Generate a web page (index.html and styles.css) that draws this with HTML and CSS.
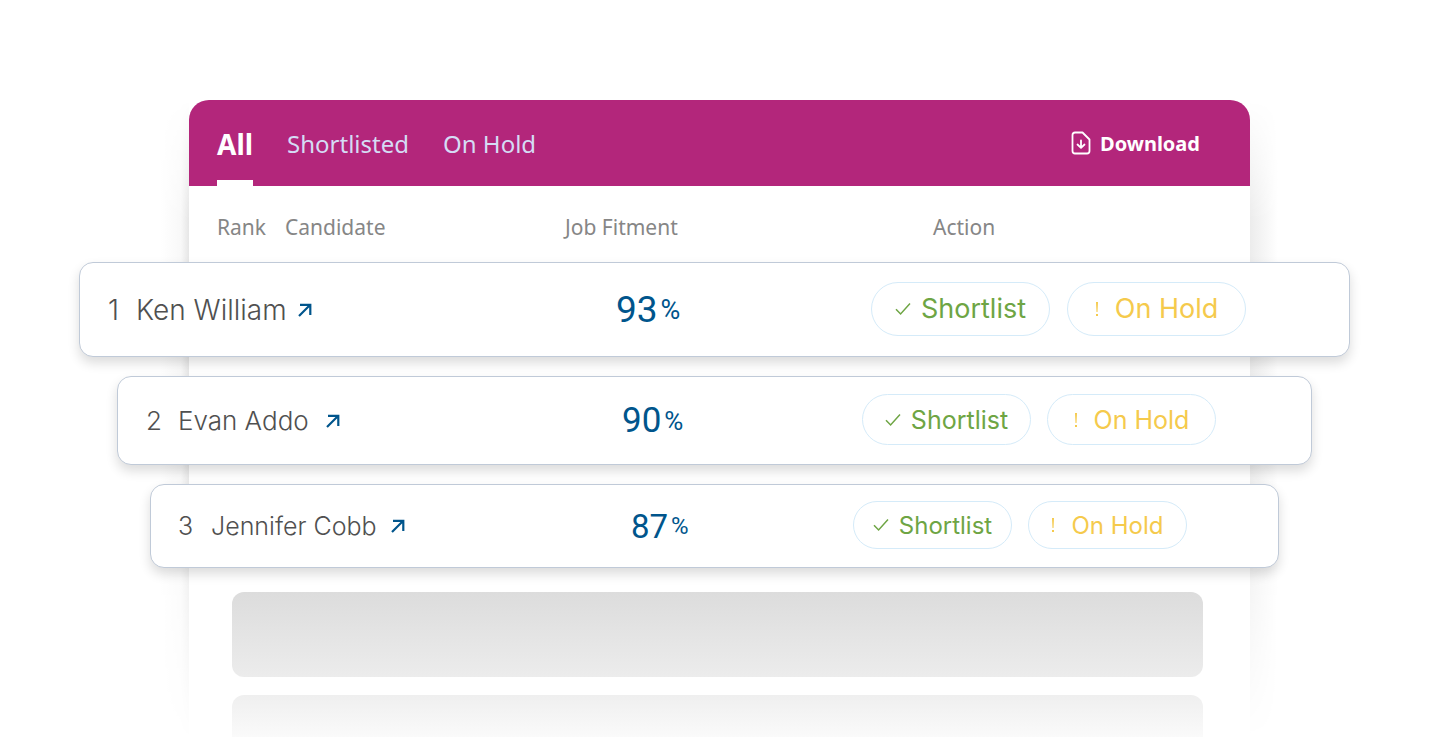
FILE: index.html
```html
<!DOCTYPE html>
<html lang="en">
    <head>
        <meta charset="utf-8">
        <title>Candidates</title>
        <link rel="stylesheet" href="styles.css">
    </head>
    <body>
        <svg class="sprite" aria-hidden="true">
            <symbol id="arrow" viewBox="0 0 14 14">
                <path d="M1 13L12.5 1.5M2 1.8H12.3V12" fill="none" stroke="currentColor" stroke-width="2.2"/>
            </symbol>
            <symbol id="check" viewBox="0 0 16 14">
                <path d="M1 7.2L5.6 12L15 1.6" fill="none" stroke="currentColor" stroke-width="1.5"/>
            </symbol>
            <symbol id="bang" viewBox="0 0 4 16">
                <path d="M1 1H3L2.5 11H1.5Z M1 13H3V15H1Z" fill="currentColor"/>
            </symbol>
        </svg>
        <div class="page">
            <div class="panel">
                <div class="header">
                    <nav class="tabs">
                        <a class="tab active" href="#all">All</a>
                        <a class="tab" href="#shortlisted">Shortlisted</a>
                        <a class="tab" href="#hold">On Hold</a>
                    </nav>
                    <button class="download" type="button">
                        <svg width="20" height="24" viewBox="0 0 20 24" fill="none" stroke="currentColor" stroke-width="1.8" stroke-linejoin="round" stroke-linecap="round">
                            <path d="M4 1.5H11.500L18.500 8.500V20Q18.500 22.500 16 22.500H4Q1.500 22.500 1.500 20V4Q1.500 1.500 4 1.500Z"/>
                            <path d="M10 9.500V16.500M6.500 13.500L10 16.800L13.500 13.500"/>
                        </svg>
                        Download
                    </button>
                </div>
                <table class="candidates">
                    <thead>
                        <tr class="titles">
                            <th>Rank</th>
                            <th>Candidate</th>
                            <th>Job Fitment</th>
                            <th>Action</th>
                        </tr>
                    </thead>
                    <tbody>
                        <tr class="row first">
                            <td>1</td>
                            <td><a class="name" href="#ken">Ken William <svg><use href="#arrow"/></svg></a></td>
                            <td class="score">93<span>%</span></td>
                            <td class="actions">
                                <button class="pill shortlist" type="button"><svg><use href="#check"/></svg>Shortlist</button>
                                <button class="pill hold" type="button"><svg><use href="#bang"/></svg>On Hold</button>
                            </td>
                        </tr>
                        <tr class="row second">
                            <td>2</td>
                            <td><a class="name" href="#evan">Evan Addo <svg><use href="#arrow"/></svg></a></td>
                            <td class="score">90<span>%</span></td>
                            <td class="actions">
                                <button class="pill shortlist" type="button"><svg><use href="#check"/></svg>Shortlist</button>
                                <button class="pill hold" type="button"><svg><use href="#bang"/></svg>On Hold</button>
                            </td>
                        </tr>
                        <tr class="row third">
                            <td>3</td>
                            <td><a class="name" href="#jennifer">Jennifer Cobb <svg><use href="#arrow"/></svg></a></td>
                            <td class="score">87<span>%</span></td>
                            <td class="actions">
                                <button class="pill shortlist" type="button"><svg><use href="#check"/></svg>Shortlist</button>
                                <button class="pill hold" type="button"><svg><use href="#bang"/></svg>On Hold</button>
                            </td>
                        </tr>
                    </tbody>
                </table>
                <div class="placeholder"></div>
                <div class="placeholder faded"></div>
            </div>
        </div>
    </body>
</html>
```
FILE: styles.css
```css
* {
    box-sizing: border-box;
}
body {
    margin: 0;
    background: white;
    font-family: "Noto Sans", sans-serif;
}
.sprite {
    display: none;
}
.page {
    height: 100vh;
    padding: 100px 180px 0 189px;
    overflow: hidden;
}
.panel {
    position: relative;
    z-index: 0;
}
/* side shadow, fades away towards the bottom */
.panel::before,
.panel::after {
    content: "";
    position: absolute;
    z-index: -1;
    top: 0;
    bottom: 0;
    width: 28px;
    -webkit-mask-image: linear-gradient(transparent, black 120px, black 350px, transparent 640px);
    mask-image: linear-gradient(transparent, black 120px, black 350px, transparent 640px);
}
.panel::before {
    right: 100%;
    background: linear-gradient(to left, #e6e6e6, #f8f8f8 8px, white);
}
.panel::after {
    left: 100%;
    background: linear-gradient(to right, #ececec, white);
}
.header {
    display: flex;
    justify-content: space-between;
    height: 86px;
    padding: 0 50px 0 28px;
    border-radius: 20px 20px 0 0;
    background: #b3267b;
}
.tabs {
    display: flex;
    gap: 34px;
}
.tab {
    color: #d5dcf5;
    font-size: 24px;
    line-height: 88px;
    text-decoration: none;
}
.tab.active {
    height: 86px;
    border-bottom: 6px solid white;
    color: white;
    font-size: 28px;
    font-weight: bold;
}
.download {
    display: flex;
    align-items: center;
    gap: 9px;
    padding: 0;
    border: 0;
    background: none;
    color: white;
    font: bold 20px "Noto Sans", sans-serif;
}
.candidates,
.candidates thead,
.candidates tbody {
    display: block;
}
.candidates tr {
    display: grid;
    align-items: center;
}
.candidates th,
.candidates td {
    padding: 0;
}
.titles {
    grid-template-columns: 68px 1fr 368px 289px;
    height: 76px;
    padding: 6px 28px 0;
    color: #868686;
    font-size: 21px;
    text-align: left;
}
.titles th {
    font-weight: normal;
}
.row {
    border: 1px solid #c0cad8;
    border-radius: 14px;
    background: white;
    box-shadow: 0 6px 12px rgba(0, 0, 0, 0.14);
    color: #505050;
    font-family: Inter, sans-serif;
    font-weight: 300;
}
.first {
    grid-template-columns: 28px 1fr 255px auto;
    height: 95px;
    margin: 0 -100px 19px -110px;
    padding: 0 103px 0 28px;
    font-size: 28px;
}
.second {
    grid-template-columns: 32px 1fr 240px auto;
    height: 89px;
    margin: 0 -62px 19px -72px;
    padding: 0 95px 0 28px;
    font-size: 26px;
}
.third {
    grid-template-columns: 33px 1fr 222px auto;
    height: 84px;
    margin: 0 -29px 24px -39px;
    padding: 0 91px 0 27px;
    font-size: 25px;
}
.name {
    display: flex;
    align-items: center;
    gap: 11px;
    color: inherit;
    text-decoration: none;
}
.name svg {
    width: 14px;
    height: 14px;
    color: #00558c;
}
.second .name {
    gap: 17px;
}
.third .name {
    gap: 14px;
}
.score {
    display: flex;
    align-items: center;
    gap: 3px;
    color: #00558c;
    font-family: Roboto, sans-serif;
    font-size: 37px;
    font-weight: 400;
}
.score span {
    font-size: 27px;
}
.second .score {
    font-size: 35px;
}
.second .score span {
    font-size: 26px;
}
.third .score {
    font-size: 33px;
}
.third .score span {
    font-size: 24px;
}
.actions {
    display: flex;
    gap: 17px;
    padding-bottom: 2px !important;
}
.second .actions,
.third .actions {
    gap: 16px;
}
.pill {
    display: flex;
    align-items: center;
    justify-content: center;
    gap: 10px;
    width: 179px;
    height: 54px;
    padding: 0;
    border: 1px solid #d5ebf9;
    border-radius: 27px;
    background: white;
    font: 27px Inter, sans-serif;
}
.second .pill {
    width: 169px;
    height: 51px;
    font-size: 25px;
}
.third .pill {
    width: 159px;
    height: 48px;
    font-size: 24px;
}
.pill svg {
    width: 16px;
    height: 14px;
}
.shortlist {
    color: #6ea544;
}
.hold {
    gap: 16px;
    color: #f5ca4c;
}
.hold svg {
    width: 4px;
    height: 16px;
}
.placeholder {
    height: 85px;
    margin: 0 47px 18px 43px;
    border-radius: 12px;
    background: linear-gradient(#dcdcdc, #ececec);
}
.faded {
    background: linear-gradient(#efefef, white 60px);
}
```
